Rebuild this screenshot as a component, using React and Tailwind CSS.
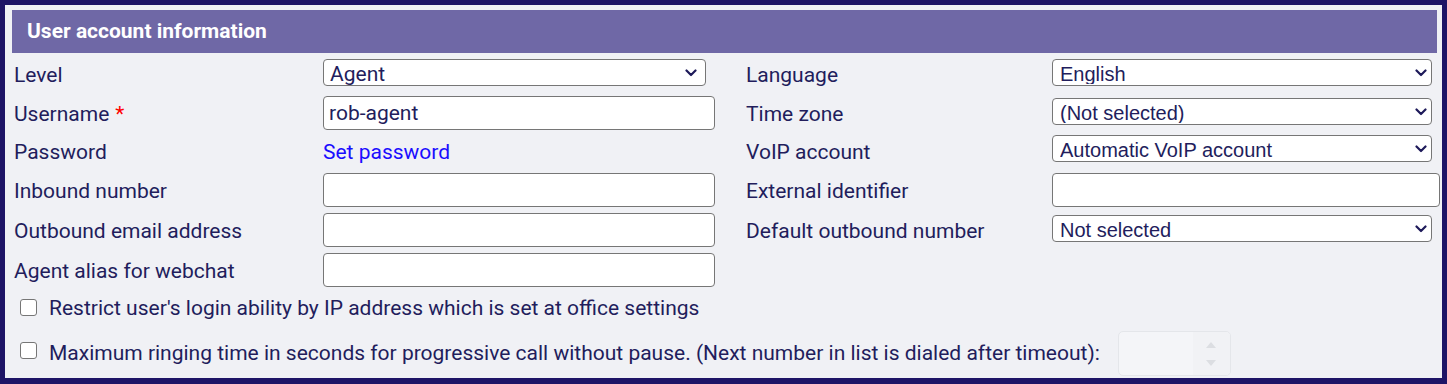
import React from "react";

const Chevron = ({ className }) => (
  <svg
    viewBox="0 0 12 8"
    className={className}
    fill="none"
    stroke="#1e1a5a"
    strokeWidth="2.2"
    strokeLinecap="round"
    strokeLinejoin="round"
  >
    <path d="M1.5 1.5l4.5 4.5 4.5-4.5" />
  </svg>
);

const Select = ({ value, width, font, chevronRight, top = "" }) => (
  <div className={`relative ${width} ${top}`}>
    <select
      defaultValue={value}
      className={`h-[27px] w-full appearance-none rounded-[4px] border border-[#767676] bg-white pt-[3px] leading-none text-[#221d5c] outline-none ${font}`}
    >
      <option>{value}</option>
    </select>
    <Chevron className={`pointer-events-none absolute top-[10px] h-[8px] w-[12px] ${chevronRight}`} />
  </div>
);

const TextInput = ({ value = "", width }) => (
  <input
    type="text"
    defaultValue={value}
    className={`h-[34px] ${width} rounded-[4px] border border-[#767676] bg-white pl-[5px] text-[21px] text-[#221d5c] outline-none`}
  />
);

const Checkbox = ({ className = "" }) => (
  <span
    className={`inline-block h-[17px] w-[17px] shrink-0 rounded-[3px] border-[1.5px] border-[#767676] bg-white ${className}`}
  />
);

const Label = ({ children }) => <div className="flex items-center pt-[3px]">{children}</div>;

export default function App() {
  const leftSel = "pl-[6px] font-['Roboto'] text-[21px]";
  const rightSel = "pl-[7px] font-['Liberation_Sans'] text-[20px]";

  return (
    <div className="box-border h-[384px] w-[1447px] border-[5px] border-b-[6px] border-[#1e1466] bg-[#f0f1f5] pl-[7px] pt-[5px] font-['Roboto',sans-serif] text-[21px] text-[#221d5c]">
      <div className="mr-[5px] flex h-[43px] items-center bg-[#6f68a6] pl-[15px] text-[21px] font-bold text-white">
        User account information
      </div>

      <div className="mt-[2px] grid grid-cols-[309px_423px_306px_1fr] grid-rows-[39px_38px_38px_40px_40px_40px] pl-[2px]">
        <Label>Level</Label>
        <div className="flex items-center">
          <Select value="Agent" width="w-[383px]" font={leftSel} chevronRight="right-[9px]" />
        </div>
        <Label>Language</Label>
        <div className="flex items-center">
          <Select value="English" width="w-[380px]" font={rightSel} chevronRight="right-[5px]" />
        </div>

        <Label>
          Username <span className="ml-[6px] text-[#ff0000]">*</span>
        </Label>
        <div className="flex items-center">
          <TextInput value="rob-agent" width="w-[392px]" />
        </div>
        <Label>Time zone</Label>
        <div className="flex items-center">
          <Select value="(Not selected)" width="w-[380px]" font={rightSel} chevronRight="right-[5px]" top="mt-[2px]" />
        </div>

        <Label>Password</Label>
        <Label>
          <a href="#" className="text-[#1a0dff]">
            Set password
          </a>
        </Label>
        <Label>VoIP account</Label>
        <div className="flex items-center">
          <Select value="Automatic VoIP account" width="w-[380px]" font={rightSel} chevronRight="right-[5px]" />
        </div>

        <Label>Inbound number</Label>
        <div className="flex items-center">
          <TextInput width="w-[392px]" />
        </div>
        <Label>External identifier</Label>
        <div className="flex items-center">
          <TextInput width="w-[388px]" />
        </div>

        <Label>Outbound email address</Label>
        <div className="flex items-center">
          <TextInput width="w-[392px]" />
        </div>
        <Label>Default outbound number</Label>
        <div className="flex items-center">
          <Select value="Not selected" width="w-[380px]" font={rightSel} chevronRight="right-[5px]" top="mt-[1px]" />
        </div>

        <Label>Agent alias for webchat</Label>
        <div className="flex items-center">
          <TextInput width="w-[392px]" />
        </div>
        <div />
        <div />
      </div>

      <div className="flex h-[34px] items-center pl-[8px]">
        <Checkbox className="mr-[12px]" />
        <span className="pt-[4px]">Restrict user's login ability by IP address which is set at office settings</span>
      </div>
      <div className="mt-[7px] flex h-[45px] items-center pl-[8px]">
        <Checkbox className="mb-[6px] mr-[12px]" />
        <span>
          Maximum ringing time in seconds for progressive call without pause. (Next number in list is dialed after timeout):
        </span>
        <div className="ml-[18px] flex h-[45px] w-[113px] overflow-hidden rounded-[5px] border border-[#e4e6ea] bg-[#f4f5f8]">
          <div className="flex-1" />
          <div className="flex w-[37px] flex-col items-center justify-center gap-[12px] bg-[#f1f2f5]">
            <span className="h-0 w-0 border-x-[5px] border-b-[6px] border-x-transparent border-b-[#dcdee2]" />
            <span className="h-0 w-0 border-x-[5px] border-t-[6px] border-x-transparent border-t-[#dcdee2]" />
          </div>
        </div>
      </div>
    </div>
  );
}
